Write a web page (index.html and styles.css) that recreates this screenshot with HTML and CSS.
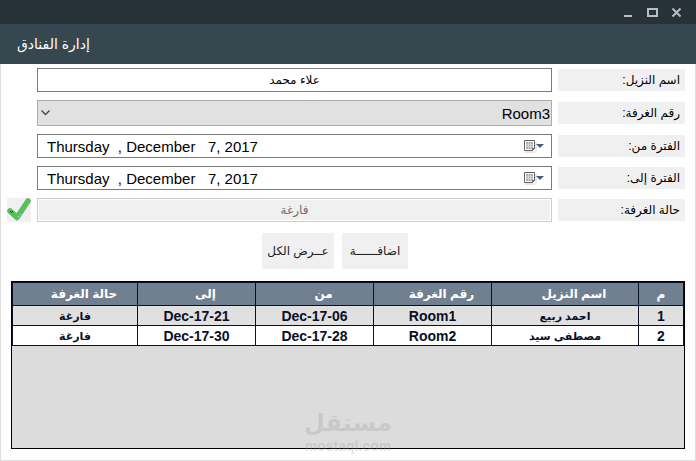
FILE: index.html
```
<!DOCTYPE html>
<html lang="ar" dir="rtl">
<head>
	<meta charset="utf-8">
	<title>إدارة الفنادق</title>
	<link rel="stylesheet" href="styles.css">
</head>
<body>
	<div class="window">
		<div class="titlebar">
			<button class="win-btn" aria-label="إغلاق">
				<svg width="11" height="11" viewBox="0 0 11 11"><path d="M1.5 1.5l8 8M9.5 1.5l-8 8" stroke="#b9bdbd" stroke-width="2" fill="none"/></svg>
			</button>
			<button class="win-btn" aria-label="تكبير">
				<svg width="11" height="11" viewBox="0 0 11 11"><path d="M0 1h11v9h-11zM2 3v5h7v-5z" fill="#b9bdbd" fill-rule="evenodd"/></svg>
			</button>
			<button class="win-btn" aria-label="تصغير">
				<svg width="11" height="11" viewBox="0 0 11 11"><path d="M1 8h8v2h-8z" fill="#b9bdbd"/></svg>
			</button>
		</div>
		<header class="header">
			<h1>إدارة الفنادق</h1>
		</header>
		<main class="content">
			<form class="form">
				<div class="row">
					<label for="guest">اسم النزيل:</label>
					<input class="field name" id="guest" type="text" value="علاء محمد">
				</div>
				<div class="row">
					<label for="room">رقم الغرفة:</label>
					<div class="select">
						<select id="room">
							<option>Room1</option>
							<option>Room2</option>
							<option selected>Room3</option>
						</select>
						<svg class="chevron" width="9" height="6" viewBox="0 0 9 6"><path d="M.5 .5l4 4 4-4" stroke="#444" stroke-width="1.3" fill="none"/></svg>
					</div>
				</div>
				<div class="row">
					<label for="from">الفترة من:</label>
					<div class="field date" dir="ltr">
						<input id="from" type="text" value="Thursday  , December   7, 2017">
						<button type="button" aria-label="اختر تاريخ البداية">
							<svg width="22" height="14" viewBox="0 0 22 14">
								<path d="M2 13h10M13 3v9" stroke="#d0d0d0" fill="none"/>
								<path d="M1.5 1.5h10v8l-2 2h-8z" fill="#fff" stroke="#6b5f5f"/>
								<path d="M3 3h7v7h-7z" fill="#aab5b2"/>
								<path d="M3 5.5h7M3 7.5h7M5.5 3v7M7.5 3v7" stroke="#dfe5e3" stroke-width=".6"/>
								<path d="M9.5 11.5v-2h2" fill="none" stroke="#6b5f5f"/>
								<path d="M13 5h8l-4 4z" fill="#41608c"/>
							</svg>
						</button>
					</div>
				</div>
				<div class="row">
					<label for="to">الفترة إلى:</label>
					<div class="field date" dir="ltr">
						<input id="to" type="text" value="Thursday  , December   7, 2017">
						<button type="button" aria-label="اختر تاريخ النهاية">
							<svg width="22" height="14" viewBox="0 0 22 14">
								<path d="M2 13h10M13 3v9" stroke="#d0d0d0" fill="none"/>
								<path d="M1.5 1.5h10v8l-2 2h-8z" fill="#fff" stroke="#6b5f5f"/>
								<path d="M3 3h7v7h-7z" fill="#aab5b2"/>
								<path d="M3 5.5h7M3 7.5h7M5.5 3v7M7.5 3v7" stroke="#dfe5e3" stroke-width=".6"/>
								<path d="M9.5 11.5v-2h2" fill="none" stroke="#6b5f5f"/>
								<path d="M13 5h8l-4 4z" fill="#41608c"/>
							</svg>
						</button>
					</div>
				</div>
				<div class="row">
					<label for="state">حالة الغرفة:</label>
					<input class="field state" id="state" type="text" value="فارغة" disabled>
					<span class="check">
						<svg width="24" height="24" viewBox="0 0 24 24">
							<path d="M3 13l7 6.5L21 3" fill="none" stroke="#8a9a8a" stroke-width="5.5" stroke-linecap="round" stroke-linejoin="round"/>
							<path d="M3 13l7 6.5L21 3" fill="none" stroke="#4fc653" stroke-width="4.5" stroke-linecap="round" stroke-linejoin="round"/>
							<path d="M3 13h1v1h-1zM5 13h1v1h-1zM4 14h1v1h-1z" fill="#234a25"/>
							<path d="M11 18h1v1h-1zM13 16h1v1h-1z" fill="#c8f0c8"/>
						</svg>
					</span>
				</div>
				<div class="actions">
					<button class="add" type="button">اضافــــــة</button>
					<button class="all" type="button">عــرض الكل</button>
				</div>
			</form>
			<div class="grid">
				<table>
					<colgroup>
						<col class="c-num"><col class="c-name"><col class="c-mid"><col class="c-mid"><col class="c-mid"><col class="c-state">
					</colgroup>
					<thead>
						<tr><th class="num">م</th><th>اسم النزيل</th><th>رقم الغرفة</th><th>من</th><th>إلى</th><th>حالة الغرفة</th></tr>
					</thead>
					<tbody>
						<tr><td class="latin">1</td><td>احمد ربيع</td><td class="latin">Room1</td><td class="latin" dir="ltr">Dec-17-06</td><td class="latin" dir="ltr">Dec-17-21</td><td>فارغة</td></tr>
						<tr><td class="latin">2</td><td>مصطفى سيد</td><td class="latin">Room2</td><td class="latin" dir="ltr">Dec-17-28</td><td class="latin" dir="ltr">Dec-17-30</td><td>فارغة</td></tr>
					</tbody>
				</table>
				<div class="watermark">
					<span class="wm-ar">مستقل</span>
					<span class="wm-en">mostaql.com</span>
				</div>
			</div>
		</main>
	</div>
</body>
</html>
```

FILE: styles.css
```
*{
	box-sizing: border-box;
}
body{
	margin: 0;
	background-color: #fff;
	color: #000;
	font-family: "Liberation Sans", "DejaVu Sans", sans-serif;
	font-size: 12px;
}
button, input, select{
	font-family: inherit;
	font-size: inherit;
	color: inherit;
	margin: 0;
}
.window{
	display: flex;
	flex-direction: column;
	min-height: 100vh;
}
.titlebar{
	display: flex;
	align-items: center;
	gap: 13px;
	height: 24px;
	padding: 0 14px;
	background-color: #263238;
}
.win-btn{
	display: flex;
	padding: 0;
	border: 0;
	background: none;
}
.header{
	display: flex;
	align-items: center;
	justify-content: flex-end;
	height: 40px;
	padding: 0 17px;
	background-color: #37474f;
}
.header h1{
	margin: 0;
	color: #fff;
	font-size: 14px;
	font-weight: normal;
}
.content{
	flex: 1;
	display: flex;
	flex-direction: column;
	padding: 4px 10px 11px;
	border: 1px solid #ddd;
	border-top: 0;
}
.form{
	display: flex;
	flex-direction: column;
	gap: 8px;
}
.row{
	display: grid;
	grid-template-columns: 127px 1fr 24px;
	column-gap: 6px;
	align-items: center;
	margin-left: -4px;
}
.row label{
	height: 22px;
	padding: 0 5px;
	background-color: #f0f0f0;
	line-height: 22px;
}
.field{
	width: 100%;
	height: 24px;
	border: 1px solid #7a7a7a;
	background-color: #fff;
}
.name, .state{
	padding: 0;
	text-align: center;
}
.state{
	border-color: #ccc;
	background-color: #f0f0f0;
	box-shadow: inset 0 0 0 1px #fff;
	color: #6d6d6d;
}
.select{
	position: relative;
}
.select select{
	display: block;
	width: 100%;
	height: 26px;
	padding: 0 1px;
	border: 1px solid #adadad;
	border-radius: 0;
	background-color: #e1e1e1;
	font-size: 15px;
	appearance: none;
}
.chevron{
	position: absolute;
	left: 4px;
	top: 10px;
	pointer-events: none;
}
.date{
	display: flex;
	align-items: center;
}
.date input{
	flex: 1;
	min-width: 0;
	padding: 0 9px;
	border: 0;
	background: none;
	font-size: 15px;
}
.date button{
	display: flex;
	padding: 0 6px;
	border: 0;
	background: none;
}
.check{
	display: flex;
	background-color: #f0f0f0;
}
.actions{
	display: flex;
	justify-content: center;
	gap: 8px;
	padding: 3px 0 12px;
	margin-right: 26px;
}
.actions button{
	height: 36px;
	padding: 0;
	border: 0;
	background-color: #f0f0f0;
	color: #222;
	white-space: nowrap;
}
.actions .add{
	width: 66px;
}
.actions .all{
	width: 72px;
}
.grid{
	position: relative;
	flex: 1;
	border: 1px solid #000;
	background-color: #dcdcdc;
}
.grid table{
	width: 100%;
	border-collapse: collapse;
	table-layout: fixed;
}
.grid th, .grid td{
	height: 20px;
	padding: 0;
	border: 1px solid #0a1028;
	text-align: center;
	font-weight: bold;
	line-height: 18px;
}
.grid th{
	height: 23px;
	padding-left: 18px;
	background-color: #708090;
	color: #fff;
}
.grid th.num{
	padding-left: 0;
}
.grid td{
	background-color: #fff;
	color: #0a1028;
	font-size: 11px;
}
.grid td.latin{
	font-size: 14px;
}
.grid tbody tr:nth-child(odd) td{
	background-color: #e0e0e0;
}
.c-num{
	width: 45px;
}
.c-mid{
	width: 118px;
}
.c-state{
	width: 125px;
}
.watermark{
	position: absolute;
	left: 0;
	right: 0;
	bottom: -6px;
	display: flex;
	flex-direction: column;
	align-items: center;
	color: rgba(150,155,158,0.28);
	font-weight: bold;
	pointer-events: none;
}
.wm-ar{
	font-size: 24px;
	line-height: 30px;
}
.wm-en{
	font-size: 14px;
	line-height: 16px;
}
```
